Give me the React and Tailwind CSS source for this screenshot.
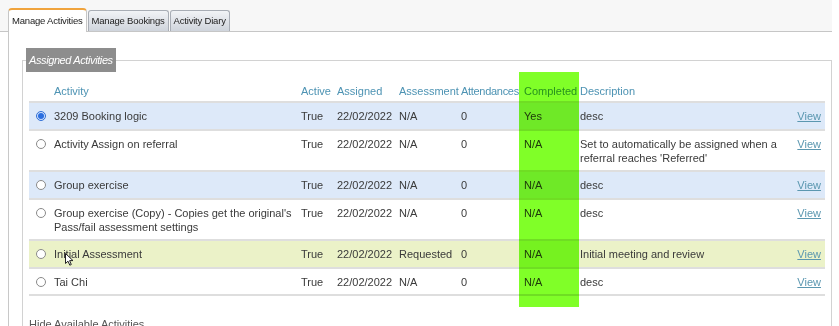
import React from 'react';

const rows = [
  { id: 1, name: '3209 Booking logic', assessment: 'N/A', completed: 'Yes', desc: 'desc', tone: 'blue', selected: true },
  { id: 2, name: 'Activity Assign on referral', assessment: 'N/A', completed: 'N/A', desc: ['Set to automatically be assigned when a', "referral reaches 'Referred'"], tone: 'white' },
  { id: 3, name: 'Group exercise', assessment: 'N/A', completed: 'N/A', desc: 'desc', tone: 'blue' },
  { id: 4, name: ["Group exercise (Copy) - Copies get the original's", 'Pass/fail assessment settings'], assessment: 'N/A', completed: 'N/A', desc: 'desc', tone: 'white' },
  { id: 5, name: 'Initial Assessment', assessment: 'Requested', completed: 'N/A', desc: 'Initial meeting and review', tone: 'hover' },
  { id: 6, name: 'Tai Chi', assessment: 'N/A', completed: 'N/A', desc: 'desc', tone: 'white' },
];

const toneClass = {
  blue: 'bg-[#dde9f9]',
  white: 'bg-white',
  hover: 'bg-[#ebf2c8]',
};

function Lines({ value }) {
  if (!Array.isArray(value)) return value;
  return value.map((line, i) => (
    <React.Fragment key={i}>
      {i > 0 && <br />}
      {line}
    </React.Fragment>
  ));
}

function Radio({ checked }) {
  return checked ? (
    <span className="ml-[7px] flex h-[10px] w-[10px] items-center justify-center rounded-full border border-[#2f6fd6] bg-[#cfe0fb]">
      <span className="h-[6px] w-[6px] rounded-full bg-[#2a6ee0]" />
    </span>
  ) : (
    <span className="ml-[7px] block h-[10px] w-[10px] rounded-full border border-[#8a8a8a] bg-white" />
  );
}

export default function App() {
  return (
    <div
      className="relative h-[326px] w-[839px] overflow-hidden bg-white text-[#3a3a3a]"
      style={{ fontFamily: '"Liberation Sans", Arial, sans-serif' }}
    >
      {/* Tabs */}
      <div className="flex h-[32px] w-[832px] items-end border-b border-[#c6c6c6] bg-[#f7f7f7] pl-[8px] text-[9.5px] tracking-[-0.2px]">
        <div className="-mb-px flex h-[24px] items-center rounded-t-[4px] border border-b-0 border-[#c6c6c6] border-t-2 border-t-[#f0a33c] bg-white px-[3px] text-[#222]">
          Manage Activities
        </div>
        <div className="ml-[1px] flex h-[21px] items-center rounded-t-[3px] border border-b-0 border-[#a8adb5] bg-gradient-to-b from-[#f1f3f6] to-[#cfd4dc] px-[3px] text-[#222]">
          Manage Bookings
        </div>
        <div className="ml-[1px] flex h-[21px] items-center rounded-t-[3px] border border-b-0 border-[#a8adb5] bg-gradient-to-b from-[#f1f3f6] to-[#cfd4dc] px-[3px] text-[#222]">
          Activity Diary
        </div>
      </div>

      {/* Panel */}
      <div className="ml-[8px] h-[300px] w-[824px] border-l border-[#c8c8c8] pl-[13px] pt-[16px]">
        <fieldset className="border border-[#d2d2d2] px-[6px] pb-[10px] pt-[8px]">
          <legend className="ml-[-3px] h-[24px] bg-[#8d8d8d] px-[3px] text-[11px] italic leading-[24px] tracking-[-0.4px] text-white">
            Assigned Activities
          </legend>
          <table className="w-full table-fixed text-[11px] leading-[14px]">
            <colgroup>
              <col className="w-[25px]" />
              <col className="w-[247px]" />
              <col className="w-[36px]" />
              <col className="w-[62px]" />
              <col className="w-[62px]" />
              <col className="w-[63px]" />
              <col className="w-[56px]" />
              <col className="w-[215px]" />
              <col />
            </colgroup>
            <thead>
              <tr className="text-left text-[#4d93b3]">
                <th className="pb-[3px] pt-[4px] font-normal" />
                <th className="pb-[3px] pt-[4px] font-normal">Activity</th>
                <th className="pb-[3px] pt-[4px] font-normal">Active</th>
                <th className="pb-[3px] pt-[4px] font-normal">Assigned</th>
                <th className="pb-[3px] pt-[4px] font-normal">Assessment</th>
                <th className="pb-[3px] pt-[4px] font-normal tracking-[-0.3px]">Attendances</th>
                <th className="pb-[3px] pt-[4px] font-normal">Completed</th>
                <th className="pb-[3px] pt-[4px] font-normal">Description</th>
                <th className="pb-[3px] pt-[4px] font-normal" />
              </tr>
            </thead>
            <tbody>
              {rows.map((r, i) => (
                <tr
                  key={r.id}
                  className={`border-t-2 border-[#dedede] align-top ${toneClass[r.tone]} ${i === rows.length - 1 ? 'border-b-2' : ''}`}
                >
                  <td className="pb-[5.5px] pt-[8px]">
                    <Radio checked={r.selected} />
                  </td>
                  <td className="pb-[5.5px] pr-[8px] pt-[6px]"><Lines value={r.name} /></td>
                  <td className="pb-[5.5px] pt-[6px]">True</td>
                  <td className="pb-[5.5px] pt-[6px]">22/02/2022</td>
                  <td className="pb-[5.5px] pt-[6px]">{r.assessment}</td>
                  <td className="pb-[5.5px] pt-[6px]">0</td>
                  <td className="pb-[5.5px] pt-[6px]">{r.completed}</td>
                  <td className="pb-[5.5px] pt-[6px]"><Lines value={r.desc} /></td>
                  <td className="pb-[5.5px] pr-[4px] pt-[6px] text-right">
                    <a href="#" className="text-[#5b97b0] underline">View</a>
                  </td>
                </tr>
              ))}
            </tbody>
          </table>
          <div className="mt-[20px] text-[11px] text-[#555]">Hide Available Activities</div>
        </fieldset>
      </div>

      {/* highlighted column (annotation) */}
      <div className="pointer-events-none absolute left-[519px] top-[72px] h-[235px] w-[60px] bg-[#80ff28] mix-blend-multiply" />

      {/* mouse pointer */}
      <svg className="pointer-events-none absolute left-[65px] top-[253px]" width="9" height="13" viewBox="0 0 9 13">
        <path d="M0.5 0.5 L0.5 10.5 L3 8.2 L4.8 12.2 L6.3 11.5 L4.6 7.6 L8 7.6 Z" fill="#fff" stroke="#222" strokeWidth="1" strokeLinejoin="round" />
      </svg>
    </div>
  );
}
